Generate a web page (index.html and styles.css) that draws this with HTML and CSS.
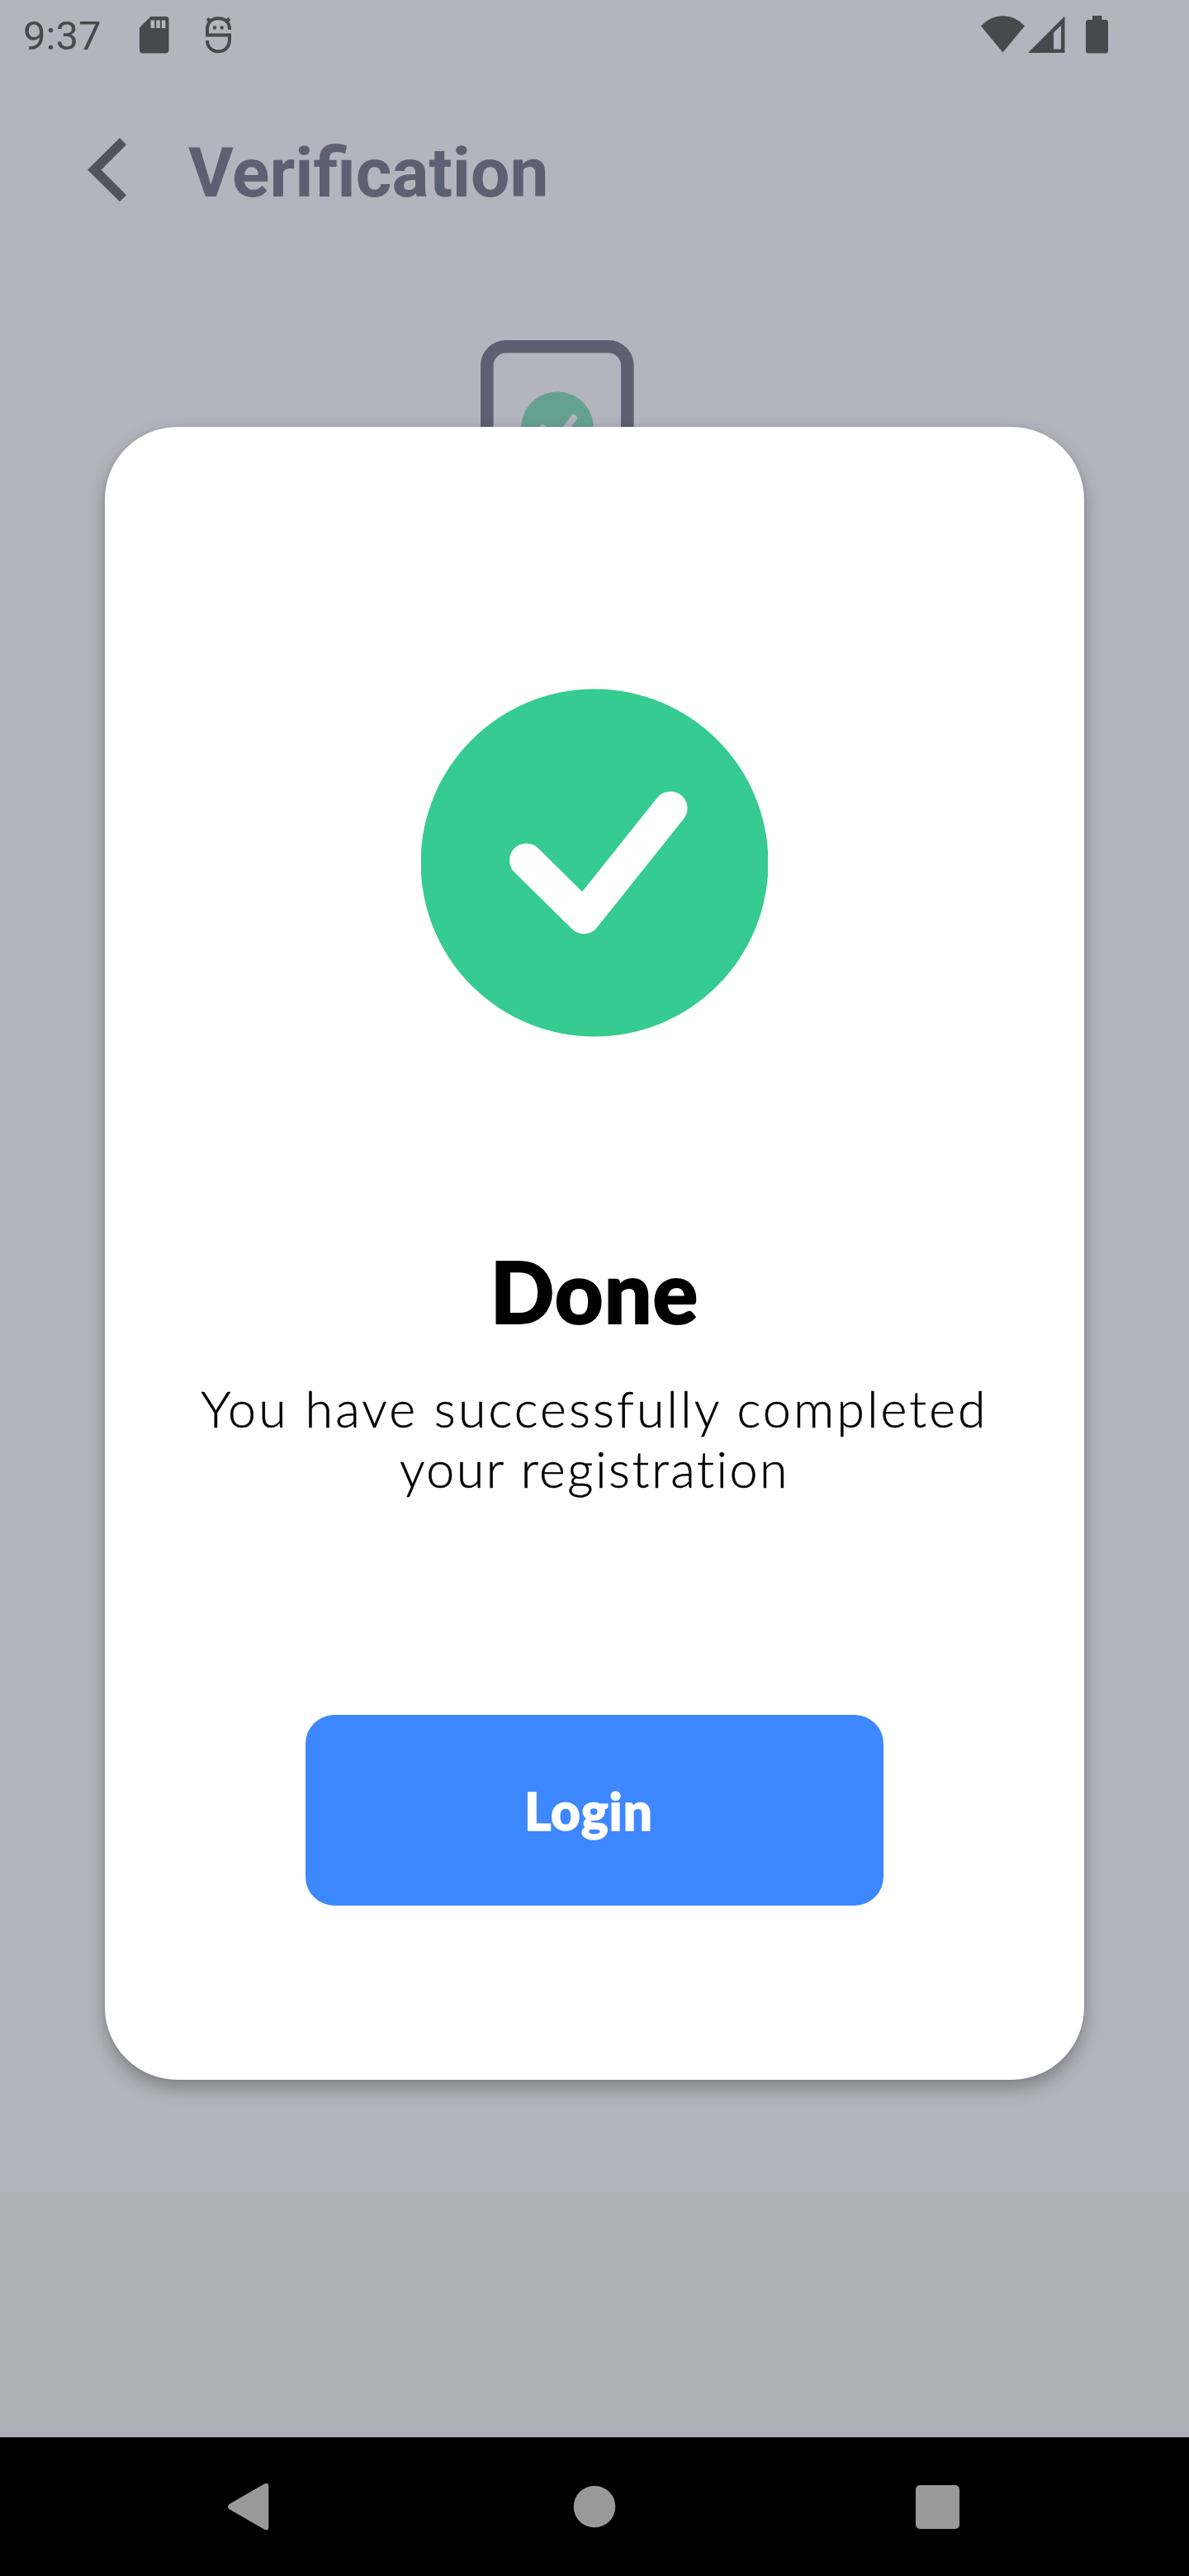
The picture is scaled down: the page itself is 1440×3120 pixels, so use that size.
FILE: index.html
```html
<!DOCTYPE html>
<html lang="en">
<head>
<meta charset="utf-8">
<title>Verification</title>
<link rel="stylesheet" href="styles.css">
</head>
<body>
<div class="screen">
  <header class="status-bar">
    <span class="clock">9:37</span>
    <svg class="icon-sd" width="36" height="46" viewBox="0 0 36 46" fill="#48494c"><path fill-rule="evenodd" d="M13.500 0H31.500Q35.500 0 35.500 4V40.500Q35.500 44.500 31.500 44.500H4Q0 44.500 0 40.500V13.500ZM13.500 4.500V14H18.300V4.500ZM20.300 4.500V14H24.800V4.500ZM26.800 4.500V14H31.300V4.500Z"/></svg>
    <svg class="icon-bug" width="32" height="46" viewBox="0 0 32 46" fill="none" stroke="#48494c" stroke-width="4"><path d="M29 16V15C29 7 23.500 2.300 15.500 2.300S2 7 2 15V22.500H29V28C29 36.500 23.500 42.300 15.500 42.300S2 37 2 29"/><path d="M2 2.500L7 7M29 2.500L24 7"/><g fill="#48494c" stroke="none"><circle cx="11" cy="13.500" r="2.200"/><circle cx="19.700" cy="13.500" r="2.200"/></g></svg>
    <div class="status-right">
      <svg width="53" height="46" viewBox="0 0 53 46" fill="#48494c"><path d="M0 12.500Q11 .2 26.500 .2T53 12.500L26.500 44.500Z"/></svg>
      <svg class="icon-signal" width="45" height="46" viewBox="0 0 45 46" fill="#48494c"><path fill-rule="evenodd" d="M44.500 .5V45H0ZM40 12L31 20.500V40.500H40Z"/></svg>
      <svg class="icon-battery" width="27" height="46" viewBox="0 0 27 46" fill="#48494c"><path d="M8 0H19.500V5H24Q27 5 27 8V42.500Q27 45.500 24 45.500H3Q0 45.500 0 42.500V8Q0 5 3 5H8Z"/></svg>
    </div>
  </header>
  <div class="app-bar">
    <svg width="48" height="78" viewBox="0 0 48 78" fill="#53535d"><path d="M39 0L47 8.200L16.500 38.700L47 69.200L39 77.300L0 38.700Z"/></svg>
    <h1 class="title">Verification</h1>
  </div>
  <main class="page">
    <svg class="phone-art" width="186" height="320" viewBox="0 0 186 320" fill="none"><rect x="7.800" y="7.800" width="170" height="304" rx="23" stroke="#5d6071" stroke-width="15.500"/><circle cx="93" cy="106.500" r="44" fill="#65a192"/><path d="M75 106L92 122L113 94" stroke="#b4b4be" stroke-width="8" stroke-linecap="round" stroke-linejoin="round"/></svg>
  </main>
  <div class="footer-band"></div>
  <nav class="nav-bar">
    <svg width="50" height="58" viewBox="0 0 50 58" fill="#999"><path d="M1.500 26L44 1.500Q49.300 -1 49.300 4V54Q49.300 59 44 56.500L1.500 32Q-1.500 29 1.500 26Z"/></svg>
    <svg class="nav-home" width="52" height="52" viewBox="0 0 52 52" fill="#999"><circle cx="26" cy="26" r="25.300"/></svg>
    <svg width="53" height="53" viewBox="0 0 53 53" fill="#999"><rect width="53" height="53" rx="5"/></svg>
  </nav>
  <div class="overlay">
    <section class="dialog">
      <svg class="done-icon" width="420" height="422" viewBox="0 0 420 422"><circle cx="210" cy="211" r="210.500" fill="#36cb91"/><path d="M127.500 208L197 276.500L302 145" fill="none" stroke="#fff" stroke-width="41" stroke-linecap="round" stroke-linejoin="round"/></svg>
      <h2 class="heading">Done</h2>
      <p class="message"><span class="line-one">You have successfully completed</span><br><span class="line-two">your registration</span></p>
      <button class="login" type="button"><span>Login</span></button>
    </section>
  </div>
</div>
</body>
</html>
```
FILE: styles.css
```css
* { box-sizing: border-box; }
body { margin: 0; }
svg { display: block; flex: none; }
.screen {
  position: relative;
  display: flex;
  flex-direction: column;
  width: 1440px;
  height: 3120px;
  overflow: hidden;
  background: #b4b4be;
  font-family: Roboto, "Liberation Sans", sans-serif;
}
.status-bar {
  display: flex;
  align-items: flex-start;
  height: 90px;
  padding: 19px 98px 0 28px;
}
.clock {
  width: 141px;
  margin-top: -4px;
  font-size: 49px;
  line-height: 58px;
  color: #48494c;
}
.icon-sd { margin-top: 1px; }
.icon-bug { margin: 1px 0 0 44px; }
.status-right { display: flex; margin-left: auto; }
.icon-signal { margin-left: 4px; }
.icon-battery { margin-left: 25px; }
.app-bar {
  display: flex;
  align-items: center;
  gap: 74px;
  height: 232px;
  padding-left: 106px;
}
.title {
  margin: 7px 0 0;
  font-size: 84px;
  line-height: 98px;
  font-weight: 700;
  color: #5d6071;
}
.page { flex: 1; padding: 90px 0 0 582px; }
.footer-band { height: 297px; background: #afafb8; }
.nav-bar {
  display: flex;
  align-items: center;
  justify-content: space-between;
  height: 168px;
  padding: 0 278px 0 276px;
  background: #000;
}
.nav-home { margin-left: 5px; }
.overlay {
  position: absolute;
  inset: 0;
  padding: 517px 127px 0;
}
.dialog {
  display: flex;
  flex-direction: column;
  align-items: center;
  height: 2002px;
  padding-top: 317px;
  border-radius: 88px;
  background: #fff;
  box-shadow: 0 10px 22px rgba(0, 0, 0, .29), 0 0 5px rgba(0, 0, 0, .08);
  color: #000;
  font-family: Lato, "Open Sans", sans-serif;
}
.heading {
  margin: 243px 0 0;
  font-size: 102px;
  line-height: 130px;
  font-weight: 900;
  letter-spacing: 1px;
  -webkit-text-stroke: 2px #000;
}
.message {
  margin: 40px 0 0;
  font-size: 61px;
  line-height: 73px;
  font-weight: 300;
  text-align: center;
  white-space: nowrap;
  -webkit-text-stroke: .5px #000;
}
.line-one { letter-spacing: 3.1px; }
.line-two { letter-spacing: 2.5px; }
.login {
  width: 700px;
  height: 231px;
  margin-top: 262px;
  padding: 0 14px 0 0;
  border: 0;
  border-radius: 35px;
  background: #3d87ff;
  color: #fff;
  font: 900 62px/76px Lato, "Open Sans", sans-serif;
  letter-spacing: 1px;
  -webkit-text-stroke: 1.5px #fff;
}
```
